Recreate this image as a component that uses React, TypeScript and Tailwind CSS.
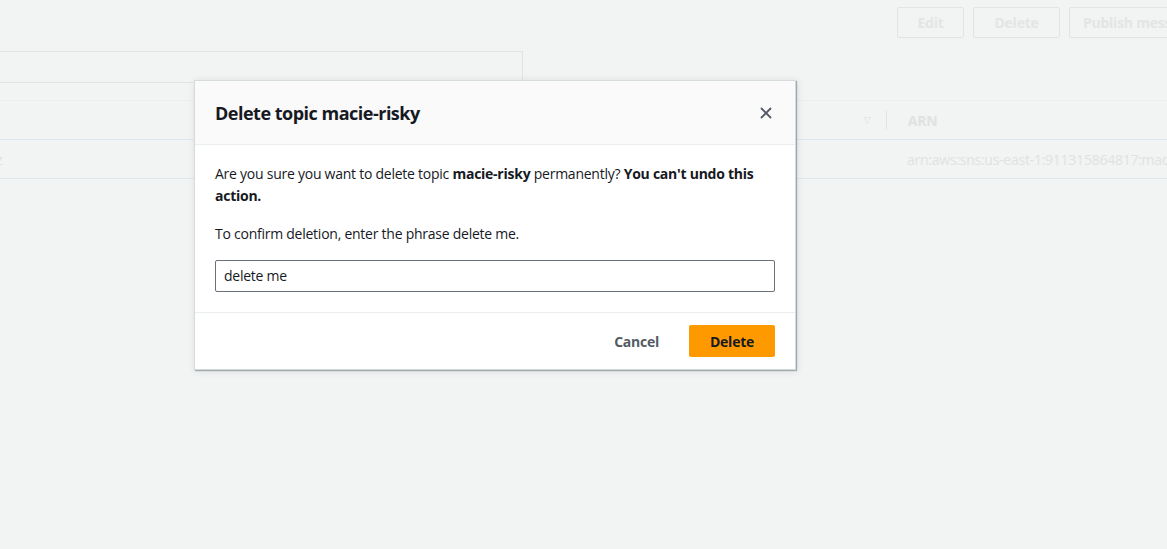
import { X } from "lucide-react";

const font = { fontFamily: '"Open Sans", "Noto Sans", Arial, sans-serif' };

function GhostButton({ label, width }: { label: string; width: string }) {
  return (
    <div
      className={`flex h-[31px] shrink-0 items-center justify-center rounded-[2px] border border-[#e2e4e4] text-[14px] font-bold tracking-[-0.25px] text-[#e3e5e5] ${width}`}
    >
      {label}
    </div>
  );
}

export default function App() {
  return (
    <div
      className="relative h-[549px] w-[1167px] overflow-hidden bg-[#f2f3f3] text-[#16191f]"
      style={font}
    >
      {/* page behind the modal, faded by the overlay */}
      <div className="flex flex-col">
        <div className="flex gap-[9px] pl-[897px] pt-[7px]">
          <GhostButton label="Edit" width="w-[67px]" />
          <GhostButton label="Delete" width="w-[87px]" />
          <GhostButton label="Publish message" width="w-[140px]" />
        </div>

        <div className="mt-[13px] h-[32px] w-[523px] border border-l-0 border-[#e2e4e4]" />

        <div className="h-[18px] border-b border-[#eceeee]" />
        <div className="flex h-[39px] items-center border-b border-[#dfe8ee] tracking-[-0.25px]">
          <div className="w-[864px] shrink-0" />
          <span className="shrink-0 text-[9px] text-[#dcdfdf]">▽</span>
          <div className="ml-[15px] h-[18px] w-px shrink-0 bg-[#e0e2e2]" />
          <span className="ml-[21px] shrink-0 text-[14px] font-bold text-[#e0e2e2]">ARN</span>
        </div>
        <div className="flex h-[39px] items-center border-b border-[#dfe8ee] pt-[1px] text-[14px] tracking-[-0.25px] text-[#e0e2e2]">
          <span className="-ml-[4px] w-[911px] shrink-0">z</span>
          <span className="shrink-0 whitespace-nowrap">arn:aws:sns:us-east-1:911315864817:macie-risky</span>
        </div>
      </div>

      {/* modal */}
      <div className="absolute left-[194px] top-[80px] w-[602px] border border-[#d5dbdb] bg-white shadow-[1px_1px_1px_0_rgba(0,28,36,0.3),1px_1px_8px_0_rgba(0,28,36,0.1)]">
        <div className="flex h-[64px] items-center justify-between border-b border-[#eaeded] bg-[#fafafa] pl-[20px] pr-[20px]">
          <h2 className="text-[18px] font-bold leading-[22px] tracking-[-0.5px]">
            Delete topic macie-risky
          </h2>
          <X className="h-[18px] w-[18px] text-[#545b64]" strokeWidth={2.4} />
        </div>

        <div className="border-b border-[#eaeded] px-[20px] pb-[20px] pt-[18px] text-[14px] leading-[22px] tracking-[-0.25px]">
          <p>
            Are you sure you want to delete topic <b>macie-risky</b> permanently?{" "}
            <b>You can't undo this action.</b>
          </p>
          <p className="mt-[16px]">To confirm deletion, enter the phrase delete me.</p>
          <div className="mt-[15px] flex h-[32px] items-center rounded-[2px] border border-[#687078] px-[8px]">
            delete me
          </div>
        </div>

        <div className="flex h-[56px] items-center justify-end gap-[12px] px-[20px] tracking-[-0.25px]">
          <div className="flex h-[32px] items-center px-[18px] text-[14px] font-bold text-[#545b64]">
            Cancel
          </div>
          <div className="flex h-[32px] w-[86px] items-center justify-center rounded-[2px] bg-[#ff9900] text-[14px] font-bold text-[#16191f]">
            Delete
          </div>
        </div>
      </div>
    </div>
  );
}
